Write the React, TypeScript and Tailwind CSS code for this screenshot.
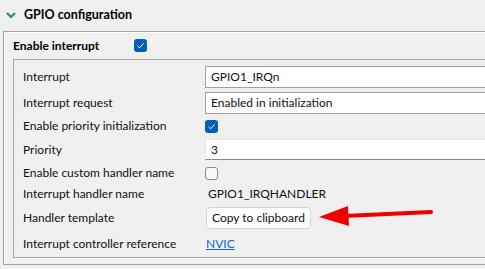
import React from "react";

function Checked() {
  return (
    <div className="w-[13px] h-[13px] rounded-[3px] bg-[#005fb8] flex items-center justify-center">
      <svg width="9" height="9" viewBox="0 0 9 9">
        <path d="M1.5 4.8 L3.6 6.8 L7.6 2.4" fill="none" stroke="#ffffff" strokeWidth="1" />
      </svg>
    </div>
  );
}

function Unchecked() {
  return <div className="w-[13px] h-[13px] rounded-[3px] border border-[#8a8a8a] bg-[#f7f7f7]" />;
}

function Row({ label, h, mt, children }: { label: string; h: string; mt: string; children: React.ReactNode }) {
  return (
    <div className={`flex items-center ${h} ${mt}`}>
      <div className="w-[182px] shrink-0 text-[12px] text-[#111]">{label}</div>
      <div className="flex-1 h-full flex items-center">{children}</div>
    </div>
  );
}

export default function App() {
  return (
    <div
      className="relative w-[485px] h-[269px] overflow-hidden bg-[#f0f0f0]"
      style={{ fontFamily: 'Lato, "Noto Sans", "Liberation Sans", sans-serif' }}
    >
      <div className="h-[31px] flex items-center pl-[6px]">
        <svg width="10" height="7" viewBox="0 0 10 7" className="mr-[8px]">
          <path d="M1 1 L5 5 L9 1" fill="none" stroke="#2d8a82" strokeWidth="2.2" />
        </svg>
        <span className="text-[12.5px] font-bold text-[#000]">GPIO configuration</span>
      </div>
      <div className="ml-[3px] w-[520px] border border-[#a7a7a7] shadow-[inset_1px_1px_0_#ffffff] pl-[9px] pb-[6px]">
        <div className="h-[27px] flex items-center">
          <div className="w-[121px] text-[12px] font-bold text-[#000]">Enable interrupt</div>
          <Checked />
        </div>
        <div className="border border-[#a7a7a7] shadow-[1px_1px_0_#ffffff] pl-[9px] pt-[6px] pb-[1px]">
          <Row label="Interrupt" h="h-[22px]" mt="mt-0">
            <div className="w-full h-full bg-white border border-[#a0a0a0] flex items-center pl-[5px] text-[12px] text-[#111]">
              GPIO1_IRQn
            </div>
          </Row>
          <Row label="Interrupt request" h="h-[22px]" mt="mt-[4px]">
            <div className="w-full h-full bg-white border border-[#a0a0a0] flex items-center pl-[5px] text-[12px] text-[#111]">
              Enabled in initialization
            </div>
          </Row>
          <Row label="Enable priority initialization" h="h-[20px]" mt="mt-[2px]">
            <Checked />
          </Row>
          <Row label="Priority" h="h-[21px]" mt="mt-[3px]">
            <div className="w-full h-full bg-white border border-[#e5e5e5] border-b-[#8a8a8a] flex items-center pl-[5px] text-[12px] text-[#111]">
              3
            </div>
          </Row>
          <Row label="Enable custom handler name" h="h-[22px]" mt="mt-[2px]">
            <Unchecked />
          </Row>
          <Row label="Interrupt handler name" h="h-[20px]" mt="mt-0">
            <span className="pl-[3px] text-[12px] text-[#111]">GPIO1_IRQHANDLER</span>
          </Row>
          <Row label="Handler template" h="h-[22px]" mt="mt-[3px]">
            <div className="h-[22px] w-[105px] ml-[1px] rounded-[4px] bg-white border border-[#d2d2d2] flex items-center justify-center text-[12px] text-[#111]">
              Copy to clipboard
            </div>
          </Row>
          <Row label="Interrupt controller reference" h="h-[24px]" mt="mt-[3px]">
            <span className="ml-[1px] text-[12px] text-[#0a66c2] underline">NVIC</span>
          </Row>
        </div>
      </div>
      <svg className="absolute left-0 top-0" width="485" height="269" viewBox="0 0 485 269">
        <path d="M431 212 L344 216" stroke="#ee0000" strokeWidth="4" strokeLinecap="round" />
        <polygon points="319,217 348,206 349,226" fill="#ee0000" />
      </svg>
    </div>
  );
}
